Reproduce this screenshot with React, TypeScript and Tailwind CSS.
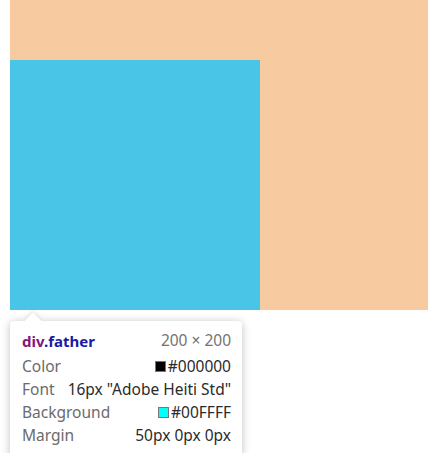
export default function App() {
  return (
    <div className="w-[428px] h-[453px] overflow-hidden bg-white" style={{ fontFamily: '"Noto Sans", "Open Sans", sans-serif' }}>
      <div className="ml-[10px] h-[310px] bg-[#f7cb9f] pt-[60px]">
        <div className="w-[250px] h-[250px] bg-[#49c5e8]" />
      </div>
      <Tooltip />
    </div>
  )
}

function Row({ label, children }: { label: string; children: React.ReactNode }) {
  return (
    <div className="flex items-center justify-between h-[23px]">
      <span className="text-[#6b6b6b]">{label}</span>
      <span className="flex items-center text-[#2b2b2b]">{children}</span>
    </div>
  )
}

function Tooltip() {
  return (
    <div className="relative ml-[10px] mt-[11px] w-[232px] rounded-[4px] bg-white pl-3 pr-[11px] pt-[9px] pb-3 text-[15.5px] leading-none shadow-[0_1px_8px_rgba(0,0,0,0.25)]">
      <div className="absolute left-[17px] -top-[6px] w-3 h-3 rotate-45 bg-white shadow-[-2px_-2px_4px_rgba(0,0,0,0.08)]" />
      <div className="relative flex items-center justify-between h-[22px] mb-[3px]">
        <span className="font-bold text-[15px]">
          <span className="text-[#881280]">div</span>
          <span className="text-[#1a1aa6]">.father</span>
        </span>
        <span className="text-[#737373]">200 × 200</span>
      </div>
      <Row label="Color">
        <span className="inline-block w-[11px] h-[11px] bg-black border border-[#777] mr-[2px]" />
        #000000
      </Row>
      <Row label="Font">16px "Adobe Heiti Std"</Row>
      <Row label="Background">
        <span className="inline-block w-[11px] h-[11px] bg-[#00ffff] border border-[#777] mr-[2px]" />
        #00FFFF
      </Row>
      <Row label="Margin">50px 0px 0px</Row>
    </div>
  )
}
